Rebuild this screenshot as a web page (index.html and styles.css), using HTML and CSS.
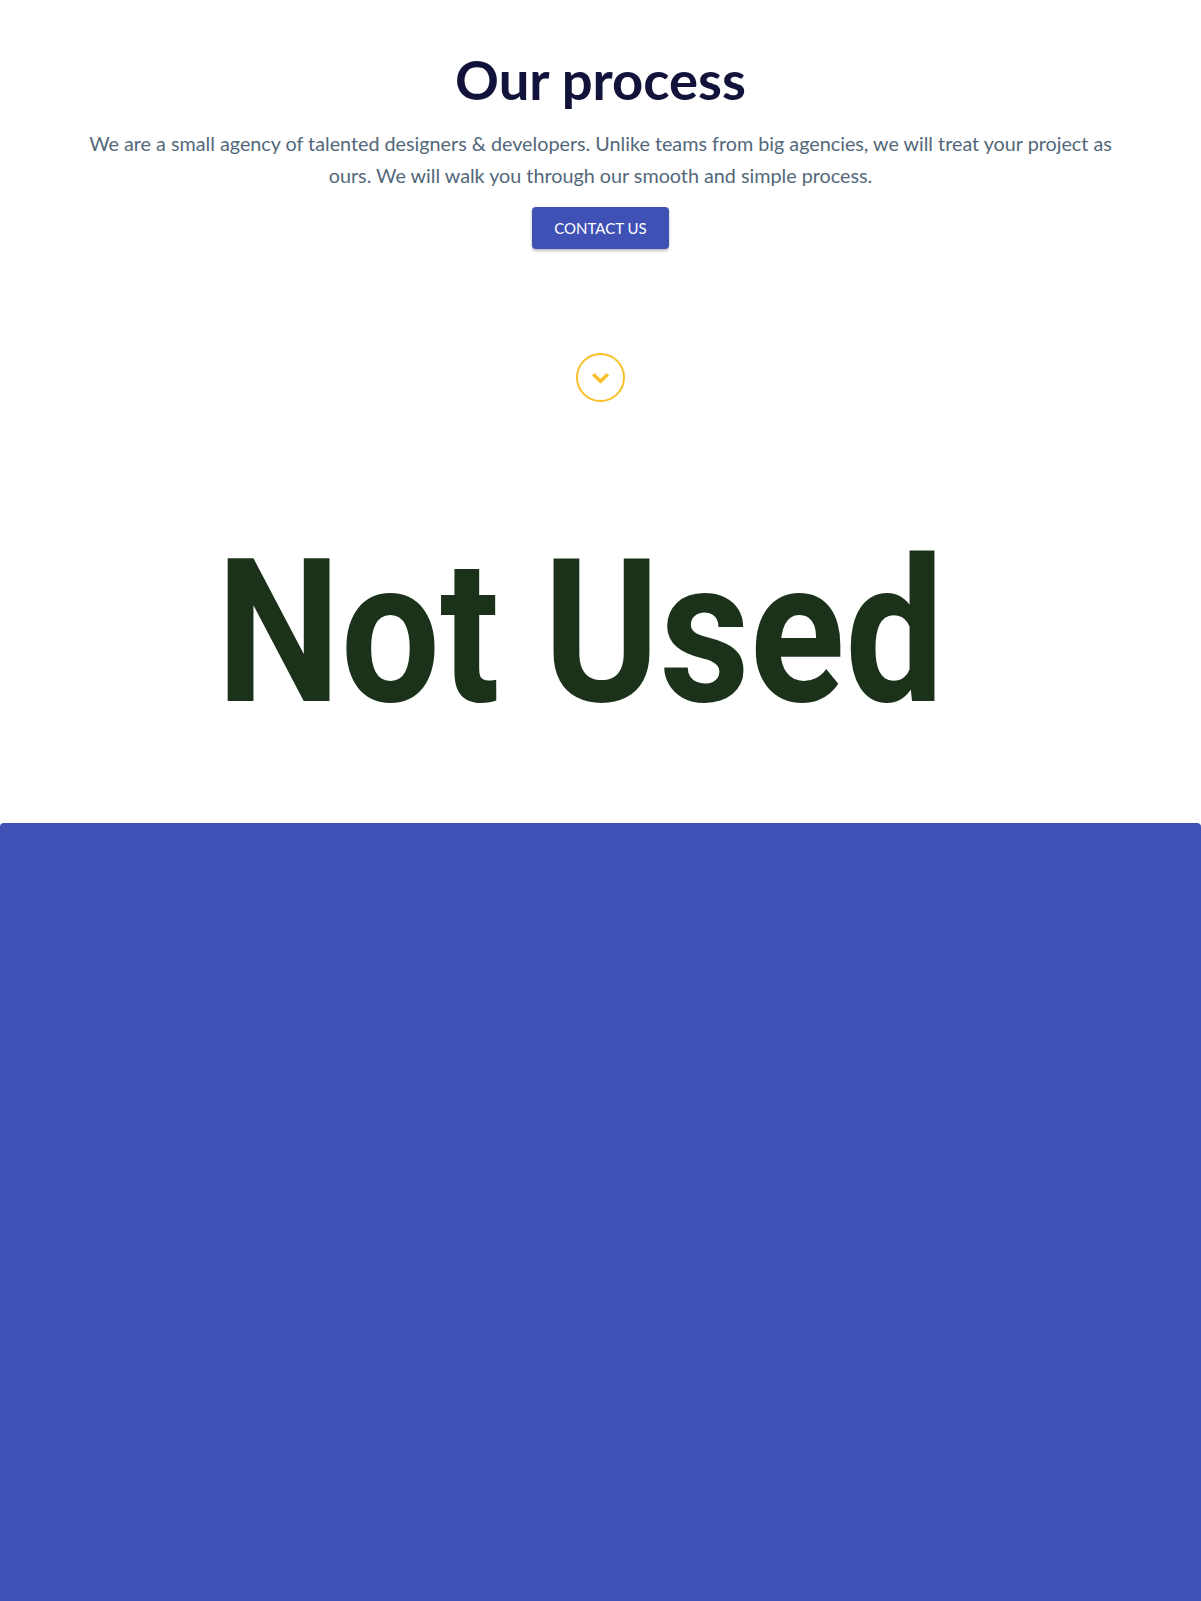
FILE: index.html
```html
<!DOCTYPE html>
<html lang="en">
<head>
<meta charset="utf-8">
<title>Our process</title>
<link rel="stylesheet" href="styles.css">
</head>
<body>
<main class="process">
  <header class="intro">
    <h1 class="intro-title">Our process</h1>
    <p class="intro-text">We are a small agency of talented designers &amp; developers. Unlike teams from big agencies, we will treat your project as ours. We will walk you through our smooth and simple process.</p>
    <a class="btn" href="#contact">Contact us</a>
  </header>
  <div class="scroll-cue">
    <span class="scroll-circle">
      <svg class="chevron" width="19" height="12" viewBox="0 0 19 12" aria-hidden="true">
        <polyline points="2.2,2.2 9.5,9.2 16.8,2.2" fill="none" stroke="#fbc02d" stroke-width="3.6" stroke-linejoin="miter" stroke-linecap="butt"/>
      </svg>
    </span>
  </div>
  <div class="placeholder">
    <span class="placeholder-text">Not Used</span>
  </div>
</main>
<section class="band"></section>
</body>
</html>
```
FILE: styles.css
```css
* { box-sizing: border-box; }

html, body {
  margin: 0;
  padding: 0;
  background: #ffffff;
}

body {
  font-family: Lato, "Open Sans", Arial, sans-serif;
  overflow: hidden;
}

.process {
  display: flex;
  flex-direction: column;
  align-items: center;
}

.intro {
  display: flex;
  flex-direction: column;
  align-items: center;
  width: 1040px;
  padding-top: 46px;
  text-align: center;
}

.intro-title {
  margin: 0;
  font-size: 54.4px;
  line-height: 67px;
  font-weight: 700;
  color: #12133a;
}

.intro-text {
  margin: 15px 0 0;
  font-size: 19.75px;
  line-height: 32px;
  color: #52687a;
}

.btn {
  display: inline-block;
  margin-top: 15px;
  width: 137px;
  height: 42px;
  line-height: 42px;
  background: #3f51b5;
  color: #ffffff;
  font-size: 15px;
  text-transform: uppercase;
  text-decoration: none;
  border-radius: 4px;
  box-shadow: 0 2px 3px rgba(0, 0, 0, 0.25);
}

.scroll-cue {
  margin-top: 104px;
  display: flex;
  justify-content: center;
}

.scroll-circle {
  width: 49px;
  height: 49px;
  border: 2px solid #fbc02d;
  border-radius: 50%;
  display: flex;
  align-items: center;
  justify-content: center;
}

.chevron {
  display: block;
  margin-top: 1px;
}

.placeholder {
  margin-top: 131px;
  height: 200px;
  width: 100%;
  display: flex;
  justify-content: center;
  padding-right: 40px;
}

.placeholder-text {
  display: inline-block;
  font-family: Roboto, "Liberation Sans", sans-serif;
  font-weight: 700;
  font-size: 200px;
  line-height: 200px;
  color: #1b3119;
  white-space: nowrap;
  transform: scaleX(0.88);
  transform-origin: center;
}

.band {
  margin-top: 90px;
  height: 778px;
  background: #3f51b5;
  border-radius: 4px 4px 0 0;
}
```
